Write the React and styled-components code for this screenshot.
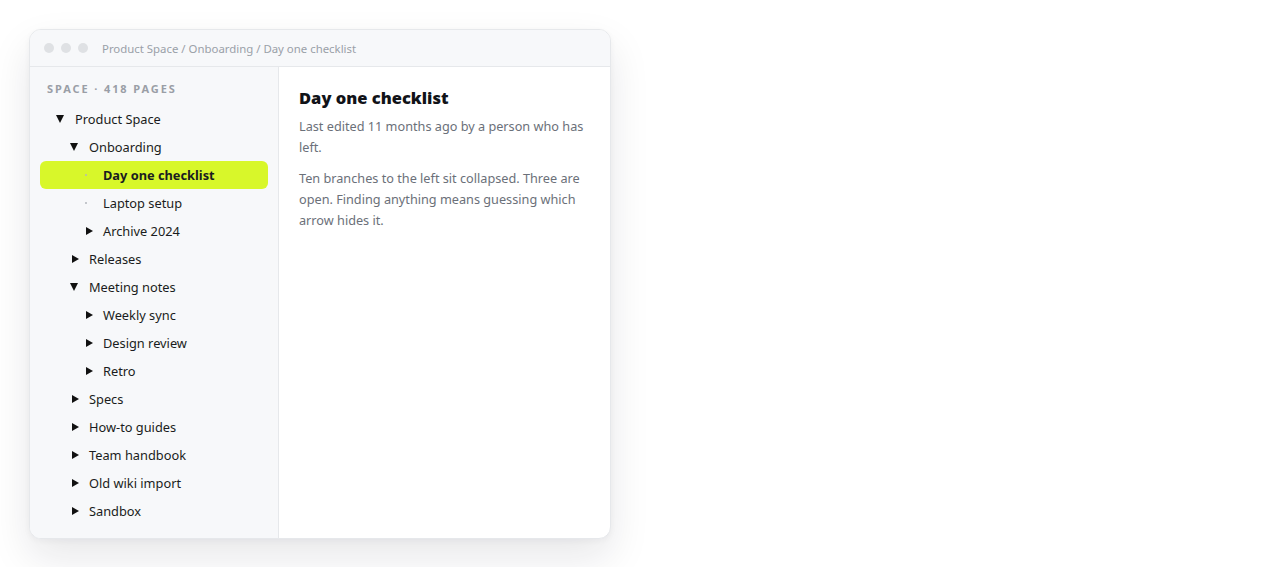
import React from 'react';
import styled, { createGlobalStyle } from 'styled-components';

const GlobalStyle = createGlobalStyle`
  html, body {
    margin: 0;
    padding: 0;
    background: #ffffff;
  }
  body {
    font-family: "Segoe UI", "Noto Sans", sans-serif;
    -webkit-font-smoothing: antialiased;
  }
`;

const Page = styled.div`
  width: 1280px;
  height: 567px;
  padding: 29px 0 0 29px;
  box-sizing: border-box;
`;

const Window = styled.div`
  width: 582px;
  height: 510px;
  border-radius: 12px;
  border: 1px solid #e6e8eb;
  box-sizing: border-box;
  background: #ffffff;
  box-shadow: 0 18px 40px rgba(15, 23, 42, 0.10), 0 2px 6px rgba(15, 23, 42, 0.04);
  overflow: hidden;
  display: flex;
  flex-direction: column;
`;

const TitleBar = styled.div`
  height: 37px;
  flex-shrink: 0;
  background: #f7f8fa;
  border-bottom: 1px solid #e6e8eb;
  display: flex;
  align-items: center;
  padding-left: 14px;
  box-sizing: border-box;
`;

const Dots = styled.div`
  display: flex;
  gap: 7px;
  margin-right: 14px;
`;

const Dot = styled.span`
  width: 10px;
  height: 10px;
  border-radius: 50%;
  background: #dfe1e4;
`;

const Crumbs = styled.div`
  font-size: 11.4px;
  color: #9aa0a8;
`;

const Body = styled.div`
  flex: 1;
  display: flex;
  min-height: 0;
`;

const Sidebar = styled.nav`
  width: 249px;
  flex-shrink: 0;
  background: #f7f8fa;
  border-right: 1px solid #e6e8eb;
  padding: 14px 10px 0;
  box-sizing: border-box;
`;

const SideHeading = styled.div`
  font-size: 11px;
  font-weight: 700;
  letter-spacing: 1.9px;
  color: #9a9ea6;
  padding-left: 7px;
  margin-bottom: 9px;
`;

const Row = styled.div`
  height: 28px;
  display: flex;
  align-items: center;
  padding-left: ${p => 15 + p.$level * 14}px;
  border-radius: 6px;
  background: ${p => (p.$active ? '#d8f72a' : 'transparent')};
  font-size: 12.8px;
  font-weight: ${p => (p.$active ? 700 : 400)};
  color: #1a1c20;
`;

const Toggle = styled.span`
  width: 10px;
  height: 10px;
  margin-right: 10px;
  flex-shrink: 0;
  display: flex;
  align-items: center;
  justify-content: center;
`;

const ArrowDown = styled.span`
  width: 0;
  height: 0;
  border-left: 4.5px solid transparent;
  border-right: 4.5px solid transparent;
  border-top: 8px solid #111;
`;

const ArrowRight = styled.span`
  width: 0;
  height: 0;
  border-top: 4.5px solid transparent;
  border-bottom: 4.5px solid transparent;
  border-left: 7px solid #111;
  margin-left: 2px;
`;

const LeafDot = styled.span`
  width: 2px;
  height: 2px;
  border-radius: 50%;
  background: #b3b7bd;
  margin-right: 4px;
`;

const Main = styled.main`
  flex: 1;
  padding: 19px 20px;
`;

const Title = styled.h1`
  margin: 0 0 7px;
  font-size: 16.5px;
  line-height: 23px;
  font-weight: 900;
  color: #111318;
`;

const Para = styled.p`
  margin: 0 0 10px;
  font-size: 12.7px;
  line-height: 21px;
  color: #6b7079;
`;

const tree = [
  { label: 'Product Space', level: 0, state: 'open' },
  { label: 'Onboarding', level: 1, state: 'open' },
  { label: 'Day one checklist', level: 2, state: 'leaf', active: true },
  { label: 'Laptop setup', level: 2, state: 'leaf' },
  { label: 'Archive 2024', level: 2, state: 'closed' },
  { label: 'Releases', level: 1, state: 'closed' },
  { label: 'Meeting notes', level: 1, state: 'open' },
  { label: 'Weekly sync', level: 2, state: 'closed' },
  { label: 'Design review', level: 2, state: 'closed' },
  { label: 'Retro', level: 2, state: 'closed' },
  { label: 'Specs', level: 1, state: 'closed' },
  { label: 'How-to guides', level: 1, state: 'closed' },
  { label: 'Team handbook', level: 1, state: 'closed' },
  { label: 'Old wiki import', level: 1, state: 'closed' },
  { label: 'Sandbox', level: 1, state: 'closed' },
];

const ToggleIcon = ({ state }) => (
  <Toggle>
    {state === 'open' && <ArrowDown />}
    {state === 'closed' && <ArrowRight />}
    {state === 'leaf' && <LeafDot />}
  </Toggle>
);

export default function App() {
  return (
    <>
      <GlobalStyle />
      <Page>
        <Window>
          <TitleBar>
            <Dots>
              <Dot />
              <Dot />
              <Dot />
            </Dots>
            <Crumbs>Product Space / Onboarding / Day one checklist</Crumbs>
          </TitleBar>
          <Body>
            <Sidebar>
              <SideHeading>SPACE · 418 PAGES</SideHeading>
              {tree.map(item => (
                <Row key={item.label} $level={item.level} $active={item.active}>
                  <ToggleIcon state={item.state} />
                  {item.label}
                </Row>
              ))}
            </Sidebar>
            <Main>
              <Title>Day one checklist</Title>
              <Para>Last edited 11 months ago by a person who has left.</Para>
              <Para>
                Ten branches to the left sit collapsed. Three are open. Finding anything
                means guessing which arrow hides it.
              </Para>
            </Main>
          </Body>
        </Window>
      </Page>
    </>
  );
}
